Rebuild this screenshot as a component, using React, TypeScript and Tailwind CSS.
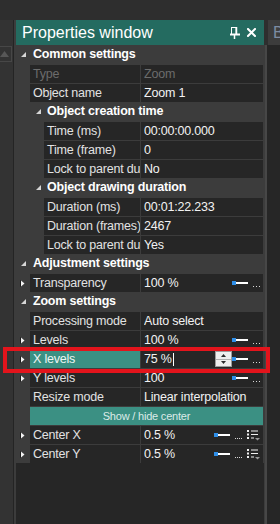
import React from "react";

function ExpTri() {
  return (
    <svg width="5" height="5" viewBox="0 0 5 5" className="block">
      <polygon points="5,0 5,5 0,5" fill="#d6d6d6" />
    </svg>
  );
}

function CollTri() {
  return (
    <svg width="5" height="7" viewBox="0 0 5 7" className="block">
      <polygon points="0,0 4,3.5 0,7" fill="#1c1c1c" />
      <polygon points="1,0.5 4.5,3.5 1,6.5" fill="#f4f4f4" />
    </svg>
  );
}

function Slider() {
  return (
    <div className="flex items-center">
      <div className="w-[4px] h-[4px] bg-[#2f8fe8]" />
      <div className="w-[12px] h-[2px] bg-white" />
    </div>
  );
}

function Dots({ n }: { n: number }) {
  return (
    <div className="h-[18px] flex items-end pb-[5px]">
      <div className={n === 3 ? "flex gap-[2px]" : "flex gap-[1px]"}>
        {Array.from({ length: n }).map((_, i) => (
          <div key={i} className="w-px h-px bg-[#d8d8d8]" />
        ))}
      </div>
    </div>
  );
}

function SliderDots() {
  return (
    <div className="flex items-center pr-[3px]">
      <Slider />
      <div className="w-[5px]" />
      <Dots n={3} />
    </div>
  );
}

function ListIcon() {
  return (
    <svg width="13" height="11" viewBox="0 0 13 11" className="block">
      <rect x="0" y="0" width="2" height="2" fill="#f0f0f0" />
      <rect x="4" y="0.5" width="7" height="1" fill="#f0f0f0" />
      <rect x="0" y="3.5" width="2" height="2" fill="#f0f0f0" />
      <rect x="4" y="4" width="7" height="1" fill="#f0f0f0" />
      <rect x="0" y="7" width="2" height="2" fill="#f0f0f0" />
      <rect x="4" y="7.5" width="3" height="1" fill="#f0f0f0" />
      <polygon points="8,8 13,8 10.5,10.5" fill="#9a9a9a" />
    </svg>
  );
}

function CenterRight() {
  return (
    <div className="flex items-center pr-[3px]">
      <Slider />
      <div className="w-[5px]" />
      <Dots n={4} />
      <div className="w-[5px]" />
      <ListIcon />
    </div>
  );
}

function SpinBox() {
  return (
    <div className="w-[17px] h-[16px] bg-[#eeeeee] border border-[#9c9c9c] flex flex-col">
      <div className="flex-1 flex items-center justify-center border-b border-[#b0b0b0]">
        <svg width="5" height="3" viewBox="0 0 5 3" className="block">
          <polygon points="2.5,0 5,3 0,3" fill="#2a2a2a" />
        </svg>
      </div>
      <div className="flex-1 flex items-center justify-center">
        <svg width="5" height="3" viewBox="0 0 5 3" className="block">
          <polygon points="0,0 5,0 2.5,3" fill="#2a2a2a" />
        </svg>
      </div>
    </div>
  );
}

type RowProps = {
  level?: 1 | 2;
  name: string;
  value?: React.ReactNode;
  expandable?: boolean;
  disabled?: boolean;
  selected?: boolean;
  right?: React.ReactNode;
};

function Row({ level = 1, name, value, expandable, disabled, selected, right }: RowProps) {
  const gutter =
    level === 1
      ? "w-[14px] shrink-0 flex items-center pl-[4px] pt-px"
      : "w-[28px] shrink-0";
  const nameW = level === 1 ? "w-[110px]" : "w-[96px]";
  const nameBg = selected
    ? "bg-[#3b9083] text-[#eef6f4]"
    : disabled
    ? "bg-[#262626] text-[#6c6c6c]"
    : "bg-[#262626] text-[#e2e2e2]";
  const valColor = disabled ? "text-[#6c6c6c]" : "text-[#f2f2f2]";
  return (
    <div className="flex h-[19px]">
      <div className={gutter}>{expandable && <CollTri />}</div>
      <div
        className={`${nameW} ${nameBg} shrink-0 mt-px h-[18px] pl-[3px] overflow-hidden whitespace-nowrap text-[12.5px] leading-[18px] tracking-[-0.2px]`}
      >
        {name}
      </div>
      <div className="w-px shrink-0" />
      <div
        className={`w-[122px] shrink-0 mt-px h-[18px] bg-[#262626] pl-[3px] flex items-center overflow-hidden whitespace-nowrap text-[12.5px] leading-[18px] tracking-[-0.2px] ${valColor}`}
      >
        <div className="flex-1 flex items-center min-w-0 overflow-hidden">{value}</div>
        {right}
      </div>
    </div>
  );
}

function Category({ label }: { label: string }) {
  return (
    <div className="flex h-[19px] items-center">
      <div className="w-[17px] shrink-0 pl-[5px] flex items-center">
        <ExpTri />
      </div>
      <span className="font-bold text-[12.5px] leading-[19px] tracking-[-0.2px] text-white whitespace-nowrap">
        {label}
      </span>
    </div>
  );
}

function SubCategory({ label }: { label: string }) {
  return (
    <div className="flex h-[19px] items-center">
      <div className="w-[31px] shrink-0 pl-[20px] flex items-center">
        <ExpTri />
      </div>
      <span className="font-bold text-[12.5px] leading-[19px] tracking-[-0.2px] text-white whitespace-nowrap">
        {label}
      </span>
    </div>
  );
}

export default function App() {
  return (
    <div className="relative w-[280px] h-[524px] overflow-hidden bg-[#2e2e2e] font-['Liberation_Sans',Arial,sans-serif] select-none">
      <div className="h-[20px]" />
      <div className="flex h-[504px]">
        {/* left strip */}
        <div className="w-[13px] shrink-0 bg-[#333333] pt-[26px]">
          <div className="w-[12px] h-[16px] border-y border-r border-[#474747] flex items-center">
            <svg width="9" height="6" viewBox="0 0 9 6" className="block">
              <polygon points="4.5,0 9,6 0,6" fill="#575757" />
            </svg>
          </div>
        </div>
        <div className="w-px shrink-0 bg-[#242424]" />
        <div className="w-[2px] shrink-0 bg-[#3c3c3c]" />

        {/* properties panel */}
        <div className="w-[248px] shrink-0 flex flex-col">
          <div className="h-[25px] bg-[#246b60] flex items-center pl-[6px] pr-[8px]">
            <span className="flex-1 text-[16px] leading-[25px] text-white whitespace-nowrap">
              Properties window
            </span>
            <svg width="10" height="12" viewBox="0 0 10 12" className="block">
              <path d="M1.5 0.5 V7 M6 0.5 V7" stroke="#ffffff" strokeWidth="1" fill="none" />
              <path d="M6.5 0 V7" stroke="#ffffff" strokeWidth="1.5" fill="none" />
              <path d="M1 0.5 H7" stroke="#ffffff" strokeWidth="1" />
              <path d="M0 7.5 H10" stroke="#ffffff" strokeWidth="2" />
              <path d="M4.5 8 V12" stroke="#ffffff" strokeWidth="1.5" />
            </svg>
            <div className="w-[7px]" />
            <svg width="9" height="9" viewBox="0 0 9 9" className="block">
              <path d="M1 1 L8 8 M8 1 L1 8" stroke="#ffffff" strokeWidth="2" strokeLinecap="square" />
            </svg>
          </div>

          <div className="bg-[#3c3c3c] flex flex-col">
            <Category label="Common settings" />
            <Row name="Type" value="Zoom" disabled />
            <Row name="Object name" value="Zoom 1" />
            <SubCategory label="Object creation time" />
            <Row level={2} name="Time (ms)" value="00:00:00.000" />
            <Row level={2} name="Time (frame)" value="0" />
            <Row level={2} name="Lock to parent du" value="No" />
            <SubCategory label="Object drawing duration" />
            <Row level={2} name="Duration (ms)" value="00:01:22.233" />
            <Row level={2} name="Duration (frames)" value="2467" />
            <Row level={2} name="Lock to parent du" value="Yes" />
            <Category label="Adjustment settings" />
            <Row name="Transparency" value="100 %" expandable right={<SliderDots />} />
            <Category label="Zoom settings" />
            <Row name="Processing mode" value="Auto select" />
            <Row name="Levels" value="100 %" expandable right={<SliderDots />} />
            <Row
              name="X levels"
              expandable
              selected
              value={
                <>
                  <span>75 %</span>
                  <span className="ml-[1px] inline-block w-px h-[13px] bg-white" />
                </>
              }
              right={
                <>
                  <SpinBox />
                  <SliderDots />
                </>
              }
            />
            <Row name="Y levels" value="100" expandable right={<SliderDots />} />
            <Row name="Resize mode" value="Linear interpolation" />
            <div className="flex h-[19px]">
              <div className="w-[14px] shrink-0" />
              <div className="w-[233px] shrink-0 mt-px h-[18px] bg-[#3b9083] text-center text-[11px] leading-[18px] tracking-[-0.2px] text-[#dcebe8] whitespace-nowrap">
                Show / hide center
              </div>
            </div>
            <Row name="Center X" value="0.5 %" expandable right={<CenterRight />} />
            <Row name="Center Y" value="0.5 %" expandable right={<CenterRight />} />
          </div>
          <div className="flex-1 bg-[#262626]" />
        </div>

        {/* right side */}
        <div className="flex-1 flex flex-col">
          <div className="h-[25px] flex">
            <div className="w-[4px] shrink-0" />
            <div className="flex-1 bg-[#3c3c3c] overflow-hidden text-[16px] leading-[25px] text-[#7d8ca3] pl-[5px]">
              B
            </div>
          </div>
          <div className="flex-1 flex">
            <div className="w-px shrink-0 bg-[#3c3c3c]" />
            <div className="w-[2px] shrink-0 bg-[#474747]" />
            <div className="flex-1 bg-[#262626]" />
          </div>
        </div>
      </div>

      {/* red highlight annotation */}
      <div className="absolute left-[3px] top-[347px] w-[267px] h-[26px] border-[4px] border-[#e3141c]" />
    </div>
  );
}
